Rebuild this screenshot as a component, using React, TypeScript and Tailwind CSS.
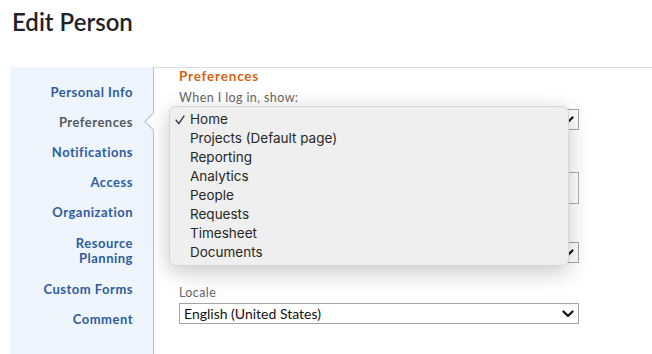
import React from "react";

const navItems: { label: string; active?: boolean; cls?: string }[] = [
  { label: "Personal Info" },
  { label: "Preferences", active: true },
  { label: "Notifications" },
  { label: "Access" },
  { label: "Organization" },
  { label: "Resource Planning", cls: "mt-[1px] w-[90px] ml-auto" },
  { label: "Custom Forms", cls: "mt-[1px]" },
  { label: "Comment" },
];

const menuItems = [
  "Home",
  "Projects (Default page)",
  "Reporting",
  "Analytics",
  "People",
  "Requests",
  "Timesheet",
  "Documents",
];

function Chevron() {
  return (
    <svg width="12" height="8" viewBox="0 0 12 8" className="shrink-0">
      <path d="M1.5 1.5 L6 6 L10.5 1.5" fill="none" stroke="#111" strokeWidth="2.2" strokeLinecap="round" strokeLinejoin="round" />
    </svg>
  );
}

function Select({ value, cls }: { value: string; cls?: string }) {
  return (
    <div className={`flex items-center justify-between w-[400px] h-[21px] border border-[#a5a5a5] bg-white pl-[4px] pr-[4px] ${cls ?? ""}`}>
      <span className="text-[14px] text-[#111] leading-none">{value}</span>
      <Chevron />
    </div>
  );
}

export default function App() {
  return (
    <div
      className="relative w-[652px] h-[354px] overflow-hidden bg-white"
      style={{ fontFamily: "Lato, 'Open Sans', sans-serif" }}
    >
      <div className="h-[67px] pl-[12px] pt-[8px]">
        <h1 className="text-[24px] font-semibold text-[#1f2328] leading-[28px]">Edit Person</h1>
      </div>
      <div className="flex h-[287px]">
        <div className="relative ml-[10px] w-[144px] bg-[#eef5fc] border-r border-[#b4c2d2] pt-[18px] pr-[20px]">
          <div className="flex flex-col gap-[15px] text-right">
            {navItems.map((n) => (
              <div
                key={n.label}
                className={`text-[13px] font-bold leading-[15px] tracking-[0.5px] ${n.active ? "text-[#555a5f]" : "text-[#2f5c9f]"} ${n.cls ?? ""}`}
              >
                {n.label}
              </div>
            ))}
          </div>
          <div className="absolute right-[-7px] top-[48px] w-[13px] h-[13px] rotate-45 bg-white border-l border-b border-[#b4c2d2]" />
        </div>
        <div className="flex-1 border-t border-[#dedede] pl-[25px] pt-[1px]">
          <div className="text-[13.5px] font-bold text-[#cf6414] leading-[14px] tracking-[0.8px]">Preferences</div>
          <div className="mt-[8px] text-[12.5px] text-[#666] leading-[13px] tracking-[0.4px]">When I log in, show:</div>
          <Select value="" cls="mt-[5px]" />
          <div className="mt-[42px] w-[400px] h-[32px] border border-[#b0b0b0] bg-white" />
          <Select value="" cls="mt-[38px]" />
          <div className="mt-[23px] text-[12.5px] text-[#666] leading-[13px] tracking-[0.4px]">Locale</div>
          <Select value="English (United States)" cls="mt-[4px]" />
        </div>
      </div>

      <div
        className="absolute left-[169px] top-[106px] w-[400px] h-[160px] rounded-[7px] bg-[#efefef] border border-[#d6d6d6] shadow-[0_6px_22px_rgba(0,0,0,0.22)] pt-[3px]"
        style={{ fontFamily: "Inter, 'Open Sans', sans-serif" }}
      >
        {menuItems.map((m, i) => (
          <div key={m} className="relative h-[19px] pl-[20px] text-[13.5px] leading-[19px] text-[#262626]">
            {i === 0 && (
              <svg width="10" height="10" viewBox="0 0 10 10" className="absolute left-[5px] top-[5px]">
                <path d="M1 5.2 L3.8 8.6 L9 1" fill="none" stroke="#262626" strokeWidth="1.3" strokeLinecap="round" strokeLinejoin="round" />
              </svg>
            )}
            {m}
          </div>
        ))}
      </div>
    </div>
  );
}
